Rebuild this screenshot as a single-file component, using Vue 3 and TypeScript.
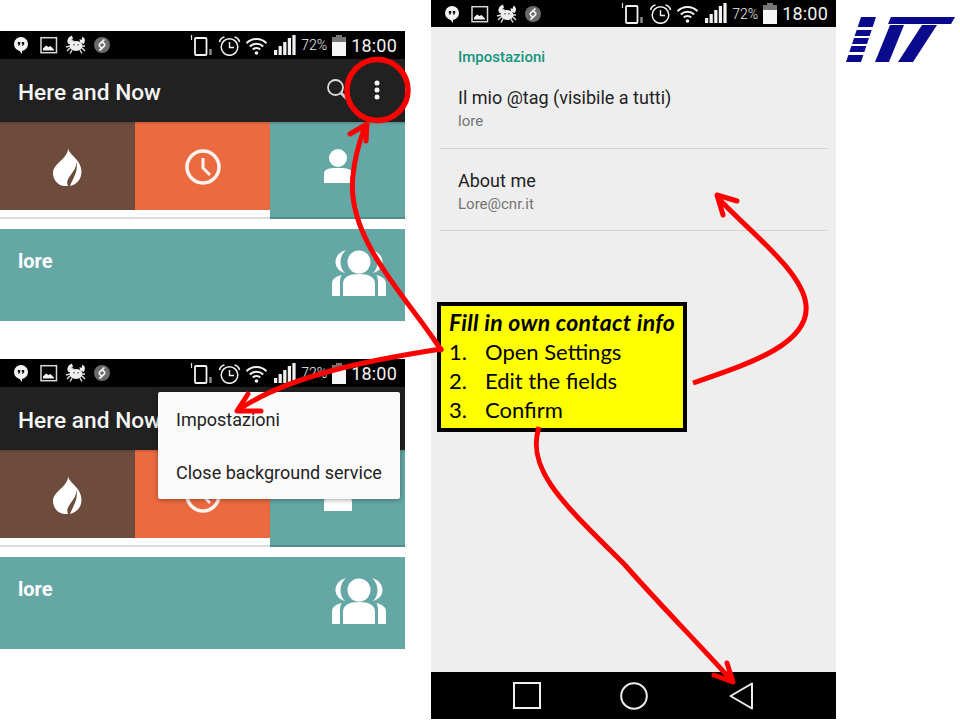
<script setup lang="ts">
type Stripe = [number, number]

const phones = [{ id: 'closed', menuOpen: false }, { id: 'open', menuOpen: true }]
const steps = ['Open Settings', 'Edit the fields', 'Confirm']
const settings = [
  { title: 'Il mio @tag (visibile a tutti)', value: 'lore' },
  { title: 'About me', value: 'Lore@cnr.it' },
]

// the striped I of the logo, cut out of one slanted bar
const stripes: Stripe[] = [[17, 27], [30, 36], [38, 44], [46, 52], [55, 62]]
const stripePoints = stripes.map(([top, bottom]) => {
  const left = (y: number) => 861 - (y - 17) / 3
  return `${left(top)},${top} ${left(top) + 15},${top} ${left(bottom) + 15},${bottom} ${left(bottom)},${bottom}`
})
</script>

<template>
  <div class="slide">
    <svg class="defs" width="0" height="0" aria-hidden="true">
      <symbol id="status-left" viewBox="0 0 96 20">
        <circle cx="7" cy="9" r="7" fill="#f4f4f4" />
        <path d="M4 14l4 5v-4z" fill="#f4f4f4" />
        <path d="M3.800 7h2.400v2.200l-1.200 1.600H4l.6-1.600h-.8zM7.800 7h2.400v2.200L9 10.800H8l.6-1.600h-.8z" fill="#111" />
        <rect x="27" y="2.700" width="15.500" height="15" fill="none" stroke="#d8d8d8" stroke-width="1.500" />
        <path d="M29 15.500v-2l3-3 2.500 1.500 2-1 3.500 3.500v1z" fill="#f4f4f4" />
        <ellipse cx="62" cy="11" rx="6.500" ry="5" fill="#eee" />
        <path d="M54.500 9c-2.500-3-.5-7 3.500-8.500l1 3.500-2 1 3 .5-2 3.500zM69.500 9c2.500-3 1.500-6-1-7.500l-1 3.500-2-1 .5 3.500z" fill="#eee" />
        <path d="M60 9v1.500M64 9v1.500" stroke="#333" stroke-width="1" />
        <path d="M56 11l-4 1M56 13l-3 3M58 15l-2 3.500M66 15l2 3.500M68 13l3 3M68 11l3 0" stroke="#ddd" stroke-width="1.500" fill="none" />
        <circle cx="88" cy="10" r="8" fill="#6a6a6a" />
        <path d="M90 5l-4.200 3.800a1.700 1.700 0 0 0 0 2.500l1.200 1M86 15l4.200-3.800a1.700 1.700 0 0 0 0-2.500l-1.200-1" fill="none" stroke="#f2f2f2" stroke-width="1.700" stroke-linecap="round" />
      </symbol>

      <symbol id="status-right" viewBox="0 0 106 21">
        <rect x="5" y="3" width="11.500" height="17" rx="1" fill="none" stroke="#f2f2f2" stroke-width="1.800" />
        <path d="M1.500 0v5" stroke="#ddd" stroke-width="1.200" />
        <path d="M20.500 14v6" stroke="#888" stroke-width="2.500" />
        <circle cx="39.500" cy="12" r="8.300" fill="none" stroke="#f2f2f2" stroke-width="1.500" />
        <path d="M39.500 7V12.500H44" fill="none" stroke="#f2f2f2" stroke-width="1.400" />
        <path d="M29.500 7c.5-2.500 2.500-4.500 5-5M49.500 7c-.5-2.500-2.500-4.500-5-5" fill="none" stroke="#f2f2f2" stroke-width="1.600" />
        <path d="M56.500 8.200a14 14 0 0 1 20 0M59.800 11.500a9.500 9.500 0 0 1 13.400 0M62.800 14.500a5.200 5.200 0 0 1 7.400 0" fill="none" stroke="#f2f2f2" stroke-width="2" />
        <circle cx="66.500" cy="18" r="1.800" fill="#f2f2f2" />
        <path d="M84 15h3.200v5H84zM88.600 11h3.200v9h-3.200zM93.200 7h3.200v13h-3.200zM97.800 3h3.200v17h-3.200zM102.400 0h3.200v20h-3.200z" fill="#f2f2f2" />
      </symbol>

      <symbol id="battery" viewBox="0 0 14 21">
        <path d="M4 0h6v2h4v5H0V2h4z" fill="#777" />
        <path d="M0 7h14v14H0z" fill="#f6f6f6" />
      </symbol>
    </svg>

    <div class="left-col">
      <section v-for="phone in phones" :key="phone.id" class="phone">
        <div class="status">
          <svg class="status-left" viewBox="0 0 96 20"><use href="#status-left" width="96" height="20" /></svg>
          <svg class="status-right" viewBox="0 0 106 21"><use href="#status-right" width="106" height="21" /></svg>
          <span class="battery-text">72%</span>
          <svg class="battery" viewBox="0 0 14 21"><use href="#battery" width="14" height="21" /></svg>
          <span class="clock-text">18:00</span>
        </div>

        <header class="appbar">
          <span class="appbar-title">Here and Now</span>
          <svg class="search" width="26" height="26" viewBox="0 0 26 26">
            <circle cx="10.500" cy="10.500" r="7.500" fill="none" stroke="#ddd" stroke-width="1.800" />
            <path d="M16 16l6 6" stroke="#ccc" stroke-width="3" />
          </svg>
          <svg class="more" width="6" height="20" viewBox="0 0 6 20">
            <circle cx="3" cy="3" r="2.500" fill="#f5f5f5" />
            <circle cx="3" cy="10" r="2.500" fill="#f5f5f5" />
            <circle cx="3" cy="17" r="2.500" fill="#f5f5f5" />
          </svg>
        </header>

        <div class="tabs">
          <div class="tab tab-brown">
            <svg width="29" height="39" viewBox="0 0 29 39">
              <path d="M15 0c-1 6 11 11 13 21 2 9-3 16-11 18h-6C4 38 0 32 0 26 0 16 16 12 15 0z" fill="#fff" />
              <path d="M15 39c-4-9 10-14 8-25 3 10-3 17-6 25z" fill="#6d4c3e" />
            </svg>
          </div>
          <div class="tab tab-orange">
            <svg width="38" height="38" viewBox="0 0 38 38">
              <circle cx="19" cy="19" r="16" fill="none" stroke="#fbf3ef" stroke-width="3.500" />
              <path d="M19 10v10l7 7" fill="none" stroke="#fbf3ef" stroke-width="3" />
            </svg>
          </div>
          <div class="tab tab-teal">
            <svg width="30" height="37" viewBox="0 0 30 37">
              <circle cx="15" cy="11" r="9" fill="#fff" />
              <path d="M1 36V27c0-5 4-6 14-6s14 1 14 6v9z" fill="#fff" />
            </svg>
          </div>
        </div>

        <div class="card">
          <span class="card-name">lore</span>
          <svg class="card-icon" width="54" height="46" viewBox="0 0 54 46">
            <circle cx="27" cy="12" r="11.500" fill="#fff" />
            <path d="M14 0C7 2 3.500 7 3.500 12c0 5 3.500 9.500 9.500 11-3-3-4.500-6.500-4.500-11S10.500 3 14 0zM40 0c7 2 10.500 7 10.500 12 0 5-3.500 9.500-9.500 11 3-3 4.500-6.500 4.500-11S43.500 3 40 0z" fill="#fff" />
            <path d="M11 46V34c0-7 6-10 16-10s16 3 16 10v12z" fill="#fff" />
            <path d="M0 46V34c0-5 3-7 9.500-9C8 28 8 31 8 34v12zM54 46V34c0-5-3-7-9.500-9 1.500 3 1.500 6 1.500 9v12z" fill="#fff" />
          </svg>
        </div>

        <div v-if="phone.menuOpen" class="menu">
          <div class="menu-item">Impostazioni</div>
          <div class="menu-item">Close background service</div>
        </div>
      </section>
    </div>

    <section class="phone-tall">
      <div class="status status-tall">
        <svg class="status-left" viewBox="0 0 96 20"><use href="#status-left" width="96" height="20" /></svg>
        <svg class="status-right" viewBox="0 0 106 21"><use href="#status-right" width="106" height="21" /></svg>
        <span class="battery-text">72%</span>
        <svg class="battery" viewBox="0 0 14 21"><use href="#battery" width="14" height="21" /></svg>
        <span class="clock-text">18:00</span>
      </div>

      <div class="settings">
        <div class="settings-head">Impostazioni</div>
        <div v-for="item in settings" :key="item.title" class="setting">
          <div class="setting-title">{{ item.title }}</div>
          <div class="setting-value">{{ item.value }}</div>
        </div>
      </div>

      <nav class="navbar">
        <svg width="28" height="27" viewBox="0 0 28 27">
          <rect x="1" y="1" width="26" height="25" fill="none" stroke="#eee" stroke-width="2" />
        </svg>
        <svg width="28" height="28" viewBox="0 0 28 28">
          <circle cx="14" cy="14" r="12.800" fill="none" stroke="#eee" stroke-width="2" />
        </svg>
        <svg class="nav-back" width="24" height="28" viewBox="0 0 24 28">
          <path d="M23 1.500v25L1.500 14z" fill="none" stroke="#eee" stroke-width="2" stroke-linejoin="round" />
        </svg>
      </nav>
    </section>

    <div class="logo-col">
      <svg width="110" height="48" viewBox="846 16 110 48" aria-label="IIT logo">
        <polygon v-for="points in stripePoints" :key="points" :points="points" fill="#0a0a8c" />
        <polygon points="890,25 904,25 889,62 875,62" fill="#0a0a8c" />
        <polygon points="891,17 955,17 951,24 888,24" fill="#0a0a8c" />
        <polygon points="922,25 937,25 913,62 898,62" fill="#0a0a8c" />
      </svg>
    </div>

    <div class="callout">
      <div class="callout-title">Fill in own contact info</div>
      <div v-for="(step, i) in steps" :key="step" class="callout-step">
        <span class="step-num">{{ i + 1 }}.</span>
        <span>{{ step }}</span>
      </div>
    </div>

    <svg class="arrows" width="960" height="720" viewBox="0 0 960 720" aria-hidden="true">
      <ellipse cx="377.500" cy="90" rx="30.500" ry="30.500" fill="none" stroke="#f00" stroke-width="5.500" />
      <g fill="none" stroke="#f00" stroke-width="5" stroke-linecap="round" stroke-linejoin="round">
        <path d="M441 350C410 300 345 240 353 175C355 155 360 140 365 126" />
        <path d="M350 134L367 124L366 141" />
        <path d="M441 349C370 360 290 375 238 410" />
        <path d="M248 394L237 411L261 411" />
        <path stroke-linecap="butt" d="M693 383C745 365 810 345 806 305C803 272 750 232 718 198" />
        <path d="M737 201L717 195L723 215" />
        <path stroke-linecap="butt" d="M539 427C525 470 565 505 625 565C660 605 700 645 732 681" />
        <path d="M727 663L733 682L714 675" />
      </g>
    </svg>
  </div>
</template>

<style scoped>
.slide {
  position: relative;
  display: grid;
  grid-template-columns: 405px 431px 1fr;
  width: 960px;
  height: 720px;
  overflow: hidden;
  background: #fff;
  font-family: Roboto, "Noto Sans", sans-serif;
}

.defs {
  position: absolute;
}

.left-col {
  display: flex;
  flex-direction: column;
  gap: 38px;
  padding-top: 31px;
}

.phone {
  position: relative;
  height: 290px;
}

.status {
  display: flex;
  align-items: center;
  height: 28px;
  padding: 0 8px 0 14px;
  background: #000;
  color: #f2f2f2;
}

.status-tall {
  height: 27px;
}

.status-left {
  width: 96px;
  height: 20px;
}

.status-right {
  width: 106px;
  height: 21px;
  margin-left: auto;
}

.battery-text {
  margin-left: 5px;
  font-size: 14px;
  font-weight: 300;
}

.battery {
  width: 14px;
  height: 21px;
  margin-left: 5px;
}

.clock-text {
  margin-left: 5px;
  font-size: 18px;
  letter-spacing: 0.2px;
}

.appbar {
  display: flex;
  align-items: center;
  height: 63px;
  padding: 0 25px 0 18px;
  background: #212121;
  color: #f5f5f5;
}

.appbar-title {
  padding-top: 3px;
  font-size: 22.700px;
  font-weight: 500;
}

.search {
  margin: -1px 0 0 auto;
}

.more {
  margin: -2px 0 0 23px;
}

.tabs {
  display: flex;
  align-items: flex-start;
  height: 97px;
  margin-bottom: 10px;
  border-bottom: 2px solid #dcdcdc;
  box-sizing: border-box;
}

.tab {
  display: flex;
  justify-content: center;
  flex: 1;
  height: 88px;
  box-shadow: inset 0 3px 3px -2px rgba(0, 0, 0, 0.22);
}

.tab-brown {
  padding-top: 25px;
  box-sizing: border-box;
  background: #6d4c3e;
}

.tab-orange {
  padding-top: 26px;
  box-sizing: border-box;
  background: #ec6a40;
}

.tab-teal {
  height: 97px;
  padding-top: 25px;
  box-sizing: border-box;
  background: #64a7a5;
  border-bottom: 2px solid #4f8e8c;
}

.card {
  display: flex;
  justify-content: space-between;
  height: 92px;
  padding: 21px 19px 0 18px;
  box-sizing: border-box;
  background: #64a7a5;
  color: #fff;
}

.card-name {
  font-size: 20px;
  font-weight: 700;
  line-height: 22px;
}

.menu {
  position: absolute;
  top: 33px;
  left: 158px;
  width: 242px;
  height: 107px;
  box-sizing: border-box;
  padding-top: 1px;
  background: #fafafa;
  border-radius: 2px;
  box-shadow: 0 1px 5px rgba(0, 0, 0, 0.35);
}

.menu-item {
  display: flex;
  align-items: center;
  height: 53px;
  padding-left: 18px;
  color: #222;
  font-size: 18px;
}

.phone-tall {
  display: flex;
  flex-direction: column;
  height: 719px;
  margin-left: 26px;
  background: #eee;
}

.settings {
  flex: 1;
  padding: 21px 9px 0;
}

.settings-head {
  margin-bottom: 1px;
  padding-left: 18px;
  color: #14957f;
  font-size: 15px;
  font-weight: 500;
  line-height: 18px;
}

.setting {
  height: 82px;
  padding: 20px 0 0 18px;
  box-sizing: border-box;
  border-bottom: 1px solid #d4d4d4;
}

.setting + .setting {
  padding-top: 21px;
}

.setting-title {
  color: #222;
  font-size: 18px;
  line-height: 22px;
}

.setting-value {
  margin-top: 2px;
  color: #757575;
  font-size: 15px;
  line-height: 20px;
}

.navbar {
  display: flex;
  align-items: center;
  justify-content: center;
  gap: 79px;
  height: 47px;
  padding-right: 2px;
  background: #000;
}

.nav-back {
  margin-left: 2px;
}

.logo-col {
  padding: 16px 0 0 10px;
}

.callout {
  position: absolute;
  top: 302px;
  left: 437px;
  width: 250px;
  height: 130px;
  padding: 2px 0 0 8px;
  box-sizing: border-box;
  background: #ff0;
  border: 4px solid #000;
  color: #000;
  font-family: Lato, "Open Sans", sans-serif;
  font-size: 22px;
  line-height: 29px;
}

.callout-title {
  font-size: 23px;
  font-weight: 700;
  font-style: italic;
  letter-spacing: 0.3px;
}

.callout-step {
  display: flex;
}

.step-num {
  width: 36px;
}

.arrows {
  position: absolute;
  top: 0;
  left: 0;
  pointer-events: none;
}
</style>
